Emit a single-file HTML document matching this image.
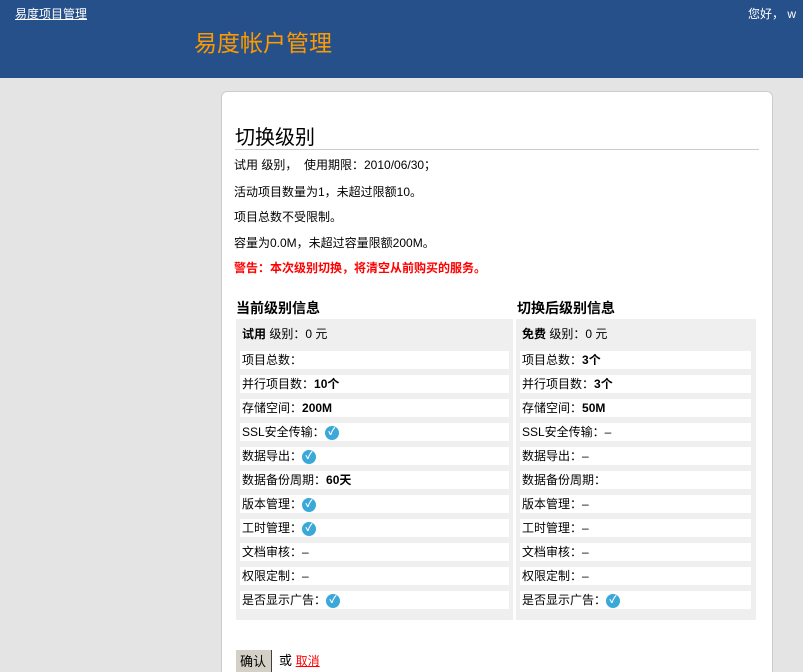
<!DOCTYPE html><html><head><meta charset="utf-8"><style>
*{margin:0;padding:0;box-sizing:border-box}
html{width:803px;height:672px;overflow:hidden}
body{width:803px;height:672px;overflow:hidden;background:#e4e4e4;font-family:"Liberation Sans","Noto Sans CJK SC","WenQuanYi Zen Hei",sans-serif;font-size:12px;color:#000;position:relative}
.hd{position:absolute;left:0;top:0;width:803px;height:78px;background:#265089}
.a{position:absolute;white-space:nowrap}
.card{position:absolute;left:221px;top:91px;width:552px;height:581px;background:#fff;border:1px solid #ccc;border-bottom:none;border-radius:6px 6px 0 0}
.p{position:absolute;background:#efefef;top:319px;height:301px}
.r{position:absolute;height:18px;background:#fff;line-height:18px;padding-left:2px;white-space:nowrap}
.ck{display:inline-block;width:14px;height:14px;border-radius:50%;background:#3aa8d8;color:#fff;font-size:10px;line-height:14px;text-align:center;vertical-align:middle;font-weight:bold}
b{font-weight:bold}
</style></head><body>
<div class="hd"></div>
<div class="a" style="left:15px;top:5px;color:#fff;font-size:12px;text-decoration:underline">易度项目管理</div>
<div class="a" style="left:748px;top:5px;color:#fff;font-size:12px">您好， w</div>
<div class="a" style="left:194px;top:24px;color:#f90;font-size:23px">易度帐户管理</div>
<div class="card"></div>
<div class="a" style="left:235px;top:149px;width:524px;height:1px;background:#ccc"></div>
<div class="a" style="left:235px;top:127px;font-size:20px;line-height:22px">切换级别</div>
<div class="a" style="left:234px;top:156px">试用 级别，&nbsp; 使用期限：2010/06/30；</div>
<div class="a" style="left:234px;top:183px">活动项目数量为1，未超过限额10。</div>
<div class="a" style="left:234px;top:208px">项目总数不受限制。</div>
<div class="a" style="left:234px;top:234px">容量为0.0M，未超过容量限额200M。</div>
<div class="a" style="left:234px;top:259px;color:#f00;font-weight:bold">警告：本次级别切换，将清空从前购买的服务。</div>
<div class="a" style="left:236px;top:298px;font-size:14px;font-weight:bold">当前级别信息</div>
<div class="a" style="left:517px;top:298px;font-size:14px;font-weight:bold">切换后级别信息</div>
<div class="p" style="left:236px;width:277px"></div>
<div class="p" style="left:516px;width:240px"></div>
<div class="a" style="left:242px;top:325px"><b>试用</b> 级别：0 元</div>
<div class="a" style="left:522px;top:325px"><b>免费</b> 级别：0 元</div>
<div id="L"></div>
<script>
var L=[["项目总数：",""],["并行项目数：","<b>10个</b>"],["存储空间：","<b>200M</b>"],["SSL安全传输：","c"],["数据导出：","c"],["数据备份周期：","<b>60天</b>"],["版本管理：","c"],["工时管理：","c"],["文档审核：","–"],["权限定制：","–"],["是否显示广告：","c"]];
var R=[["项目总数：","<b>3个</b>"],["并行项目数：","<b>3个</b>"],["存储空间：","<b>50M</b>"],["SSL安全传输：","–"],["数据导出：","–"],["数据备份周期：",""],["版本管理：","–"],["工时管理：","–"],["文档审核：","–"],["权限定制：","–"],["是否显示广告：","c"]];
var h="";function v(x){return x=="c"?'<span class="ck">✓</span>':x}
for(var i=0;i<11;i++){var t=351+i*24;
h+='<div class="r" style="left:240px;top:'+t+'px;width:269px">'+L[i][0]+v(L[i][1])+'</div>';
h+='<div class="r" style="left:520px;top:'+t+'px;width:231px">'+R[i][0]+v(R[i][1])+'</div>';}
document.getElementById("L").innerHTML=h;
</script>
<div class="a" style="left:236px;top:650px;width:36px;height:22px;background:#d4d0c8;border-right:1px solid #404040;padding:4px 0 0 4px;font-size:13px;line-height:16px;overflow:hidden">确认</div>
<div class="a" style="left:279px;top:653px;font-size:13px;line-height:16px">或 <span style="color:#f00;text-decoration:underline;font-size:12px">取消</span></div>
</body></html>
